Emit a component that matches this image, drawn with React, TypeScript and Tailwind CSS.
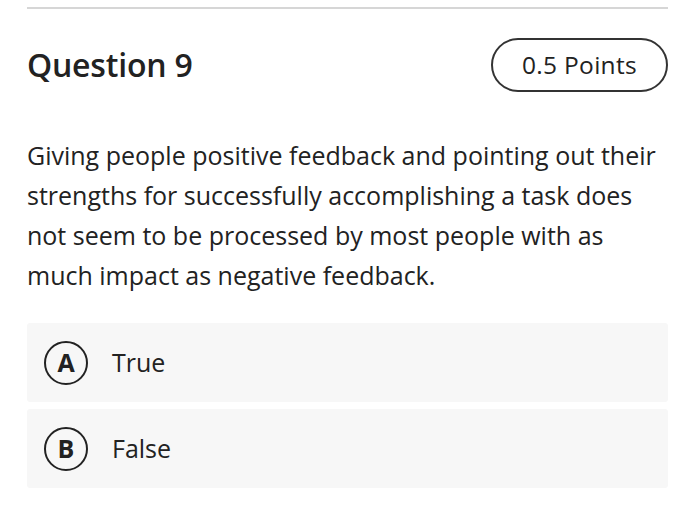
export default function App() {
    const options = [
        { letter: "A", label: "True" },
        { letter: "B", label: "False" },
    ];

    return (
        <div className="w-[700px] h-[519px] bg-white pl-[27px] pr-[32px] pt-[7px] font-['Open_Sans',sans-serif] text-[#222222]">
            <div className="h-[2px] bg-[#d6d6d6]" />

            {/* Header */}
            <div className="flex items-center justify-between mt-[29px]">
                <h2 className="text-[32px] font-semibold leading-none tracking-[-0.2px]">Question 9</h2>
                <div className="h-[54px] w-[177px] rounded-full border-2 border-[#333333] flex items-center justify-center text-[24.5px] leading-none tracking-[0.3px]">
                    0.5 Points
                </div>
            </div>

            {/* Prompt */}
            <p className="mt-[43px] text-[25px] leading-[40px]">
                Giving people positive feedback and pointing out their strengths for successfully
                accomplishing a task does not seem to be processed by most people with as much impact
                as negative feedback.
            </p>

            {/* Options */}
            <div className="mt-[28px] flex flex-col gap-[7px]">
                {options.map((o) => (
                    <div
                        key={o.letter}
                        className="h-[79px] rounded-[3px] bg-[#f7f7f7] flex items-center pl-[17px]"
                    >
                        <div className="w-[44px] h-[44px] rounded-full border-[2.5px] border-[#222222] flex items-center justify-center text-[25px] font-bold leading-none">
                            {o.letter}
                        </div>
                        <span className="ml-[24px] text-[25px]">{o.label}</span>
                    </div>
                ))}
            </div>
        </div>
    );
}
